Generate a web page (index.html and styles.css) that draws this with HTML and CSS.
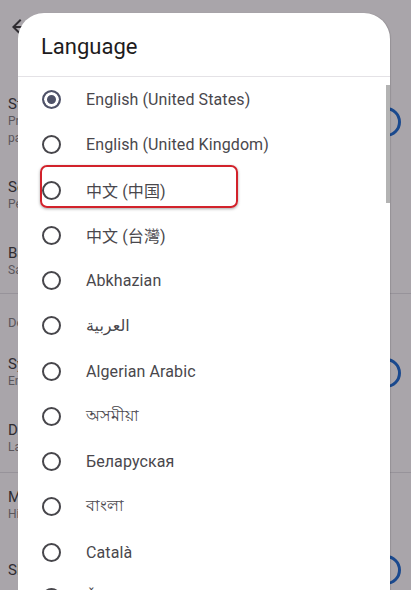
FILE: index.html
```html
<!DOCTYPE html>
<html lang="en">
<head>
<meta charset="utf-8">
<title>Language</title>
<link rel="stylesheet" href="styles.css">
</head>
<body>
<div class="page">
  <div class="appbar">
    <svg class="back" viewBox="0 0 24 24" width="24" height="24"><path d="M20 11H7.83l5.59-5.59L12 4l-8 8 8 8 1.41-1.41L7.83 13H20v-2z"/></svg>
  </div>
  <div class="item">
    <div class="texts"><div class="t">Status</div><div class="s">Private</div><div class="s">paused</div></div>
    <span class="toggle"></span>
  </div>
  <div class="item">
    <div class="texts"><div class="t">Sound</div><div class="s">Pending</div></div>
  </div>
  <div class="item last">
    <div class="texts"><div class="t">Backup</div><div class="s">Saved</div></div>
  </div>
  <div class="divider"></div>
  <div class="section">Device</div>
  <div class="item">
    <div class="texts"><div class="t">Sync</div><div class="s">Enabled</div></div>
    <span class="toggle"></span>
  </div>
  <div class="item">
    <div class="texts"><div class="t">Date</div><div class="s">Latest</div></div>
  </div>
  <div class="divider"></div>
  <div class="item">
    <div class="texts"><div class="t">Media</div><div class="s">High</div></div>
  </div>
  <div class="item">
    <div class="texts"><div class="t">Sleep</div></div>
    <span class="toggle"></span>
  </div>
</div>

<div class="dialog">
  <div class="dialog-title">Language</div>
  <ul class="options">
    <li class="option selected"><span class="radio"></span><span class="label">English (United States)</span></li>
    <li class="option"><span class="radio"></span><span class="label">English (United Kingdom)</span></li>
    <li class="option"><span class="radio"></span><span class="label">中文 (中国)</span></li>
    <li class="option"><span class="radio"></span><span class="label">中文 (台灣)</span></li>
    <li class="option"><span class="radio"></span><span class="label">Abkhazian</span></li>
    <li class="option"><span class="radio"></span><span class="label" lang="ar">العربية</span></li>
    <li class="option"><span class="radio"></span><span class="label">Algerian Arabic</span></li>
    <li class="option"><span class="radio"></span><span class="label" lang="as">অসমীয়া</span></li>
    <li class="option"><span class="radio"></span><span class="label">Беларуская</span></li>
    <li class="option"><span class="radio"></span><span class="label" lang="bn">বাংলা</span></li>
    <li class="option"><span class="radio"></span><span class="label">Català</span></li>
    <li class="option"><span class="radio"></span><span class="label">Čeština</span></li>
  </ul>
  <div class="scrollbar"></div>
</div>

<div class="highlight"></div>
</body>
</html>
```

FILE: styles.css
```css
html, body {
  margin: 0;
  height: 590px;
  overflow: hidden;
}
body {
  position: relative;
  background: #a9a5aa;
  font-family: Roboto, "Noto Sans", "DejaVu Sans", "Noto Sans CJK SC", sans-serif;
}

/* background page (dimmed by scrim) */
.page {
  display: flex;
  flex-direction: column;
  color: #2f2c31;
}
.appbar {
  height: 80px;
  padding: 15px 0 0 8px;
  box-sizing: border-box;
}
.back {
  display: block;
  fill: #2f2c31;
}
.item {
  display: flex;
  align-items: center;
  justify-content: space-between;
  padding: 16px 10px 16px 8px;
}
.item.last {
  padding-bottom: 14px;
}
.texts .t {
  font-size: 15px;
  line-height: 17px;
  color: #2f2c31;
  white-space: nowrap;
}
.texts .s {
  font-size: 12px;
  line-height: 17px;
  color: #5a565c;
  white-space: nowrap;
}
.divider {
  height: 1px;
  background: #97939a;
}
.section {
  white-space: nowrap;
  font-size: 13px;
  line-height: 17px;
  color: #5a565c;
  padding: 20px 0 9px 8px;
}
.toggle {
  width: 52px;
  height: 30px;
  box-sizing: border-box;
  border: 3px solid #1a498e;
  border-radius: 15px;
}

/* dialog */
.dialog {
  position: absolute;
  left: 18px;
  top: 13px;
  width: 372px;
  height: 620px;
  background: #ffffff;
  border-radius: 26px;
  overflow: hidden;
  box-shadow: 1px 0 1px rgba(0, 0, 0, 0.12);
}
.dialog-title {
  padding: 21px 23px 16px;
  font-size: 22px;
  line-height: 26px;
  color: #1d1b20;
  border-bottom: 1px solid #e4e2e6;
}
.options {
  list-style: none;
  margin: 0;
  padding: 0;
}
.option {
  display: flex;
  align-items: center;
  height: 45.25px;
}
.radio {
  flex: none;
  width: 19px;
  height: 19px;
  margin-left: 24px;
  box-sizing: border-box;
  border: 2px solid #47464b;
  border-radius: 50%;
}
.option.selected .radio {
  border-color: #4f5268;
  background: #4f5268;
  box-shadow: inset 0 0 0 3px #ffffff;
}
.label {
  margin-left: 25px;
  font-size: 16px;
  letter-spacing: 0.1px;
  color: #49474c;
  white-space: nowrap;
}
.scrollbar {
  position: absolute;
  right: 0;
  top: 72px;
  width: 4px;
  height: 118px;
  background: #b3b3b3;
}

/* red annotation box */
.highlight {
  position: absolute;
  left: 40px;
  top: 165px;
  width: 198px;
  height: 43px;
  box-sizing: border-box;
  border: 2.5px solid #d2222b;
  border-radius: 7px;
  box-shadow: 0 1px 3px rgba(0, 0, 0, 0.35);
}
```
